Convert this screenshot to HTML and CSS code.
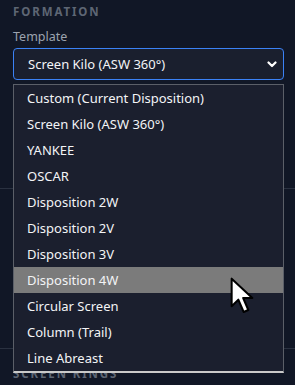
FILE: index.html
```html
<!DOCTYPE html>
<html lang="en">
<head>
    <meta charset="UTF-8">
    <meta name="viewport" content="width=device-width, initial-scale=1.0">
    <title>Formation</title>
    <link rel="stylesheet" href="styles.css">
</head>
<body>
    <div class="panel">
        <section class="section formation">
            <h3 class="section-title">Formation</h3>
            <label class="field-label" for="template">Template</label>
            <div class="select-wrap">
                <div class="select" id="template">
                    <span>Screen Kilo (ASW 360°)</span>
                    <svg class="chevron" width="10" height="7" viewBox="0 0 10 7">
                        <path d="M1.5 1.5 L5 5 L8.5 1.5" fill="none" stroke="#fff" stroke-width="2.2" stroke-linecap="round" stroke-linejoin="round"/>
                    </svg>
                </div>

                <ul class="options">
                    <li>Custom (Current Disposition)</li>
                    <li>Screen Kilo (ASW 360°)</li>
                    <li>YANKEE</li>
                    <li>OSCAR</li>
                    <li>Disposition 2W</li>
                    <li>Disposition 2V</li>
                    <li>Disposition 3V</li>
                    <li class="hover">Disposition 4W</li>
                    <li>Circular Screen</li>
                    <li>Column (Trail)</li>
                    <li>Line Abreast</li>
                </ul>
            </div>
        </section>

        <section class="section filler-one"></section>

        <section class="section rings">
            <h3 class="section-title">Screen Rings</h3>
        </section>
    </div>

    <svg class="cursor" width="25" height="37" viewBox="0 0 15 22.2">
        <path d="M1 1 L1 17.5 L5 13.6 L8.2 21 L11 19.8 L7.9 12.6 L13.4 12.6 Z" fill="#fff" stroke="#000" stroke-width="1.2" stroke-linejoin="round"/>
    </svg>
</body>
</html>
```

FILE: styles.css
```css
body {
    margin: 0;
    background-color: #111726;
    font-family: 'Noto Sans', 'Open Sans', sans-serif;
    color: #e5e7eb;
    overflow: hidden;
}

.panel {
    width: 295px;
    height: 385px;
}

.section {
    padding: 0 11px 0 13px;
    border-bottom: 1px solid #2a3140;
}

.section-title {
    margin: 0;
    padding-top: 5px;
    font-size: 11.5px;
    font-weight: 700;
    letter-spacing: 1.9px;
    text-transform: uppercase;
    color: #5e6674;
    line-height: 14px;
}

.formation {
    height: 188px;
}

.field-label {
    display: block;
    margin-top: 10px;
    font-size: 12.5px;
    color: #9ca3af;
    line-height: 16px;
}

.select-wrap {
    position: relative;
    margin-top: 3px;
}

.select {
    display: flex;
    align-items: center;
    justify-content: space-between;
    height: 30px;
    padding: 0 6px 0 14px;
    border: 1px solid #3b82f6;
    border-radius: 4px;
    background-color: #1a1f2e;
    font-size: 13px;
    color: #f3f4f6;
}

.options {
    position: absolute;
    top: 36px;
    left: 0;
    right: 0;
    margin: 0;
    padding: 0;
    list-style: none;
    background-color: #1b1f2e;
    border: 1px solid #5b5f68;
    border-bottom: 2px solid #c9c9c9;
    z-index: 2;
}

.options li {
    height: 26px;
    line-height: 26px;
    padding-left: 13px;
    font-size: 13px;
    color: #f3f4f6;
}

.options li.hover {
    background-color: #7b7b7b;
}

.filler-one {
    height: 159px;
}

.rings {
    border-bottom: none;
}

.rings .section-title {
    padding-top: 18px;
}

.cursor {
    position: absolute;
    left: 230px;
    top: 277px;
    z-index: 3;
}
```
